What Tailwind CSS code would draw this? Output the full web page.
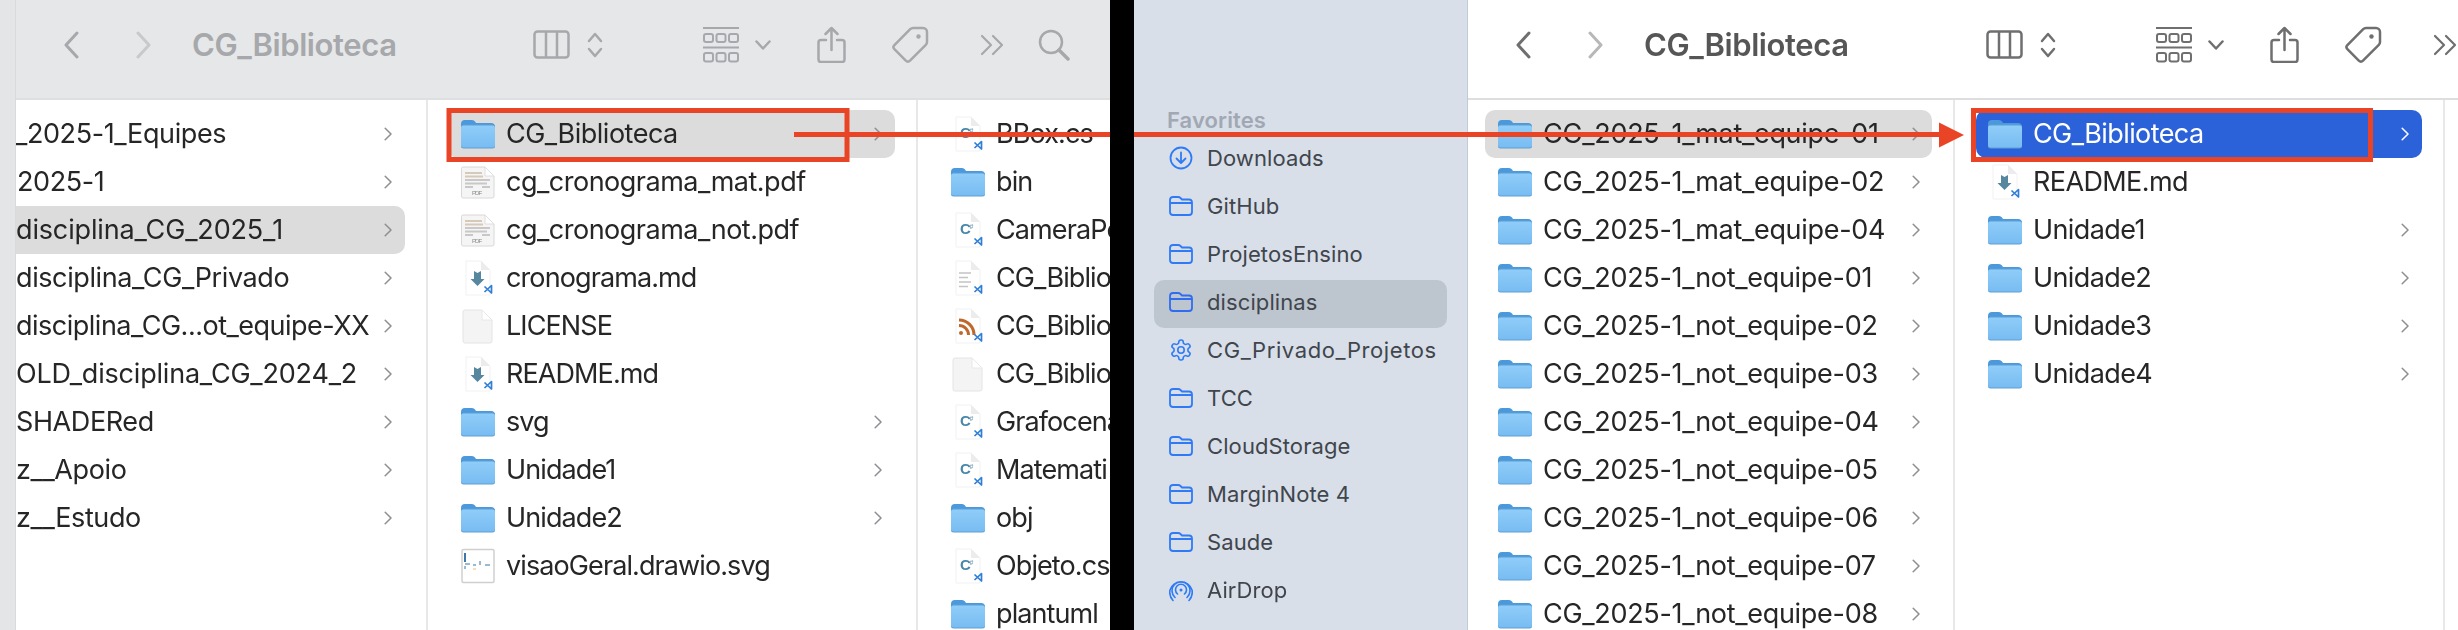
<!DOCTYPE html>
<html lang="en">
<head>
    <meta charset="UTF-8">
    <title>CG_Biblioteca</title>
    <script src="https://cdn.jsdelivr.net/npm/@tailwindcss/browser@4"></script>
</head>
<body class="bg-white">
    <!-- shared icons (not display:none, the gradient would stop working) -->
    <svg class="absolute h-0 w-0">
        <defs>
            <linearGradient id="fold" x1="0" y1="0" x2="0" y2="1"><stop offset="0" stop-color="#8fcdf9"/><stop offset="1" stop-color="#78bcf2"/></linearGradient>
        </defs>
        <symbol id="folder" viewBox="0 0 34 30">
            <path d="M0 5q0-4 4-4h7q2 0 3 1.500l1 1.500h15q4 0 4 4v8H0z" fill="#4b98dc"/>
            <path d="M0 8q0-2.500 2.500-2.500h29q2.500 0 2.500 2.500v19q0 2.500-2.500 2.500h-29q-2.500 0-2.500-2.500z" fill="#5d9fd2"/>
            <path d="M0 8.500q0-2 2.500-2h29q2.500 0 2.500 2v17.500q0 2.500-2.500 2.500h-29q-2.500 0-2.500-2.500z" fill="url(#fold)"/>
        </symbol>
        <symbol id="chev" viewBox="0 0 8 14"><path d="M1.200 1.200 7 7l-5.800 5.800" fill="none" stroke="currentColor" stroke-width="1.500" stroke-linecap="round" stroke-linejoin="round"/></symbol>
        <symbol id="vs" viewBox="0 0 34 36"><path d="M23.500 26.500l7 6.500V25.500l-7 6.500" fill="none" stroke="#2f7ed8" stroke-width="1.700" stroke-linejoin="round"/></symbol>
        <symbol id="page" viewBox="0 0 34 36">
            <path d="M5 1h15l9 9v25H5z" fill="#fff" stroke="#f1f1f1"/>
            <path d="M20 1v9h9z" fill="#ececec"/>
        </symbol>
        <symbol id="md" viewBox="0 0 34 36">
            <use href="#page"/>
            <path d="M13 11l3.500 2 3.500-2v8h3.500l-7 7-7-7H13z" fill="#56879f"/>
            <use href="#vs"/>
        </symbol>
        <symbol id="cs" viewBox="0 0 34 36">
            <use href="#page"/>
            <text x="9" y="22" font-family="Liberation Sans" font-weight="700" font-size="15" fill="#4a86a8">C</text>
            <text x="18.500" y="17" font-family="Liberation Sans" font-weight="700" font-size="7" fill="#7fa6bd">#</text>
            <use href="#vs"/>
        </symbol>
        <symbol id="lines" viewBox="0 0 34 36">
            <use href="#page"/>
            <path d="M8 13h12M8 17.500h9M8 22h12M8 26.500h9" stroke="#c4c4c4" stroke-width="1.500"/>
            <use href="#vs"/>
        </symbol>
        <symbol id="rss" viewBox="0 0 34 36">
            <use href="#page"/>
            <circle cx="10" cy="25" r="2" fill="#c0682c"/>
            <path d="M8 17.500a9.500 9.500 0 0 1 9.500 9.500M8 12a15 15 0 0 1 15 15" fill="none" stroke="#c0682c" stroke-width="3"/>
            <use href="#vs"/>
        </symbol>
        <symbol id="blank" viewBox="0 0 34 36">
            <path d="M4 2h17l10 10v21q0 2-2 2H4q-2 0-2-2V4q0-2 2-2z" fill="#f4f4f4" stroke="#e4e4e4"/>
            <path d="M21 2v10h10z" fill="#fff" stroke="#e8e8e8"/>
        </symbol>
        <symbol id="pdf" viewBox="0 0 34 36">
            <path d="M2 3h22l9 9v20q0 2-2 2H2q-1.500 0-1.500-2V4.500Q.5 3 2 3z" fill="#f5f5f5" stroke="#d8d8d8"/>
            <path d="M24 3v9h9z" fill="#fff" stroke="#dedede"/>
            <path d="M4 9h17M4 12.500h18" stroke="#d7c9b8" stroke-width="2"/>
            <path d="M4 16h25M4 19.500h22M4 23h8M21 23h8" stroke="#c8c8c8" stroke-width="2"/>
            <text x="11" y="31" font-family="Liberation Sans" font-size="6" fill="#8a8a8a">PDF</text>
        </symbol>
        <symbol id="drawio" viewBox="0 0 34 36">
            <rect x="1" y="1.500" width="32" height="33" rx="1.500" fill="#fff" stroke="#cfcfcf" stroke-width="1.500"/>
            <path d="M4 5v9" stroke="#3f78a8" stroke-width="2"/>
            <path d="M4 16h5M4 18v3M19 13v4M12 17h3M24 17h5" stroke="#7aa3c4" stroke-width="1.500"/>
            <path d="M12 21h3" stroke="#ecd9a8" stroke-width="1.500"/>
        </symbol>
        <symbol id="back" viewBox="0 0 16 28"><path d="M14 2 3 14l11 12" fill="none" stroke="currentColor" stroke-width="3" stroke-linecap="round" stroke-linejoin="round"/></symbol>
        <symbol id="forward" viewBox="0 0 16 28"><path d="M2 2l11 12L2 26" fill="none" stroke="currentColor" stroke-width="3" stroke-linecap="round" stroke-linejoin="round"/></symbol>
        <symbol id="columns" viewBox="0 0 37 29"><path d="M4.500 1.500h28a3 3 0 0 1 3 3v20a3 3 0 0 1-3 3h-28a3 3 0 0 1-3-3v-20a3 3 0 0 1 3-3zM13 1.500v26M24 1.500v26" fill="none" stroke="currentColor" stroke-width="2.500"/></symbol>
        <symbol id="updown" viewBox="0 0 16 26"><path d="M2 9l6-7 6 7M2 17l6 7 6-7" fill="none" stroke="currentColor" stroke-width="2.500" stroke-linecap="round" stroke-linejoin="round"/></symbol>
        <symbol id="group" viewBox="0 0 36 36">
            <path d="M0 1h36M0 20.500h36" stroke="currentColor" stroke-width="2"/>
            <g fill="none" stroke="currentColor" stroke-width="2">
                <rect x="1" y="7" width="9" height="8" rx="2"/><rect x="13.500" y="7" width="9" height="8" rx="2"/><rect x="26" y="7" width="9" height="8" rx="2"/>
                <rect x="1" y="26" width="9" height="8.500" rx="2"/><rect x="13.500" y="26" width="9" height="8.500" rx="2"/><rect x="26" y="26" width="9" height="8.500" rx="2"/>
            </g>
        </symbol>
        <symbol id="drop" viewBox="0 0 16 10"><path d="M1.500 1.500 8 8.500l6.500-7" fill="none" stroke="currentColor" stroke-width="2.500" stroke-linecap="round" stroke-linejoin="round"/></symbol>
        <symbol id="share" viewBox="0 0 29 37"><path d="M9 14H4a2.500 2.500 0 0 0-2.500 2.500v17A2.500 2.500 0 0 0 4 36h21a2.500 2.500 0 0 0 2.500-2.500v-17A2.500 2.500 0 0 0 25 14h-5M14.500 24V2M8.500 8l6-6 6 6" fill="none" stroke="currentColor" stroke-width="2.500" stroke-linecap="round" stroke-linejoin="round"/></symbol>
        <symbol id="tag" viewBox="0 0 37 37">
            <path d="M21 2h10a4 4 0 0 1 4 4v10a4 4 0 0 1-1.200 2.800L18 34.600a3 3 0 0 1-4.200 0L2.400 23.200a3 3 0 0 1 0-4.200L18.200 3.200A4 4 0 0 1 21 2z" fill="none" stroke="currentColor" stroke-width="2.500"/>
            <circle cx="26.500" cy="10.500" r="2.200" fill="currentColor"/>
        </symbol>
        <symbol id="more" viewBox="0 0 25 22"><path d="M2 2l9 9-9 9M13 2l9 9-9 9" fill="none" stroke="currentColor" stroke-width="2.200" stroke-linecap="round" stroke-linejoin="round"/></symbol>
        <symbol id="search" viewBox="0 0 32 32"><circle cx="13" cy="13" r="11" fill="none" stroke="currentColor" stroke-width="2.500"/><path d="M21 21l9 9" stroke="currentColor" stroke-width="3.500" stroke-linecap="round"/></symbol>
        <symbol id="side-folder" viewBox="0 0 24 20"><path d="M1 4q0-3 3-3h5q1.500 0 2.500 1l1.500 1.500h7q3 0 3 3V16q0 3-3 3H4q-3 0-3-3zM1 7h22" fill="none" stroke="currentColor" stroke-width="1.800"/></symbol>
        <symbol id="side-down" viewBox="0 0 24 24"><circle cx="12" cy="12" r="10.500" fill="none" stroke="currentColor" stroke-width="1.800"/><path d="M12 6.500v10M7.500 12.500l4.500 4.500 4.500-4.500" fill="none" stroke="currentColor" stroke-width="1.800" stroke-linecap="round" stroke-linejoin="round"/></symbol>
        <symbol id="side-gear" viewBox="0 0 24 24"><path d="M12.220 2h-.44a2 2 0 0 0-2 2v.18a2 2 0 0 1-1 1.730l-.43.250a2 2 0 0 1-2 0l-.15-.08a2 2 0 0 0-2.730.730l-.22.380a2 2 0 0 0 .730 2.730l.15.100a2 2 0 0 1 1 1.720v.510a2 2 0 0 1-1 1.740l-.15.090a2 2 0 0 0-.730 2.730l.22.380a2 2 0 0 0 2.730.730l.15-.08a2 2 0 0 1 2 0l.43.250a2 2 0 0 1 1 1.730V20a2 2 0 0 0 2 2h.44a2 2 0 0 0 2-2v-.18a2 2 0 0 1 1-1.730l.43-.25a2 2 0 0 1 2 0l.15.08a2 2 0 0 0 2.730-.73l.22-.39a2 2 0 0 0-.73-2.730l-.15-.08a2 2 0 0 1-1-1.740v-.5a2 2 0 0 1 1-1.740l.15-.09a2 2 0 0 0 .73-2.730l-.22-.38a2 2 0 0 0-2.730-.73l-.15.08a2 2 0 0 1-2 0l-.43-.25a2 2 0 0 1-1-1.730V4a2 2 0 0 0-2-2z" fill="none" stroke="currentColor" stroke-width="1.600"/><circle cx="12" cy="12" r="3.200" fill="none" stroke="currentColor" stroke-width="1.600"/></symbol>
        <symbol id="side-air" viewBox="0 0 24 24"><circle cx="12" cy="12" r="1.500" fill="currentColor"/><path d="M8.500 16a5.500 5.500 0 1 1 7 0M6 19.500a9 9 0 1 1 12 0M4 22.500a12 12 0 0 1-3-10.500A11.500 11.500 0 0 1 23 12a12 12 0 0 1-3 10.500" fill="none" stroke="currentColor" stroke-width="1.600" stroke-linecap="round"/></symbol>
    </svg>

    <div class="relative flex h-[630px] w-[2458px] overflow-hidden font-['Inter',sans-serif] text-[27px] tracking-[-0.3px] text-[#262626] blur-[0.4px]">
        <div class="w-4 shrink-0 border-r border-[#d9dadc] bg-[#e4e5e7]"></div>

        <!-- left window (inactive) -->
        <div class="flex w-[1094px] shrink-0 flex-col overflow-hidden">
            <div class="flex h-[100px] shrink-0 items-center border-b-2 border-[#dedfe1] bg-[#e6e7e9] pb-[9px] pl-[47px] text-[#a6a8ab]">
                <svg class="h-7 w-4 shrink-0"><use href="#back"/></svg>
                <svg class="ml-[57px] h-7 w-4 shrink-0 text-[#c8c9cc]"><use href="#forward"/></svg>
                <div class="ml-[40px] mt-[2px] w-[202px] shrink-0 whitespace-nowrap text-[31px] font-semibold tracking-[-0.4px]">CG_Biblioteca</div>
                <svg class="ml-[139px] h-[29px] w-[37px] shrink-0"><use href="#columns"/></svg>
                <svg class="ml-[17px] h-[26px] w-4 shrink-0"><use href="#updown"/></svg>
                <svg class="ml-[100px] h-9 w-9 shrink-0"><use href="#group"/></svg>
                <svg class="ml-4 h-2.5 w-4 shrink-0"><use href="#drop"/></svg>
                <svg class="ml-[46px] h-[37px] w-[29px] shrink-0"><use href="#share"/></svg>
                <svg class="ml-[46px] h-[37px] w-[37px] shrink-0"><use href="#tag"/></svg>
                <svg class="ml-[51px] h-[22px] w-[25px] shrink-0"><use href="#more"/></svg>
                <svg class="ml-[33px] h-8 w-8 shrink-0"><use href="#search"/></svg>
            </div>
            <div class="flex flex-1 overflow-hidden">
                <div class="w-[412px] shrink-0 overflow-hidden border-r-2 border-[#e8e8e8] pt-2.5 tracking-[-0.4px]">
                    <div class="-ml-[20px] mr-[21px] flex h-12 items-center pl-[19px] pr-[13px]"><span class="flex-1 truncate">_2025-1_Equipes</span><svg class="h-[14px] w-2 text-[#8e8e93]"><use href="#chev"/></svg></div>
                    <div class="-ml-[20px] mr-[21px] flex h-12 items-center pl-[21px] pr-[13px]"><span class="flex-1 truncate">2025-1</span><svg class="h-[14px] w-2 text-[#8e8e93]"><use href="#chev"/></svg></div>
                    <div class="-ml-[20px] mr-[21px] flex h-12 items-center rounded-[10px] bg-[#dcdcdc] pl-[20px] pr-[13px]"><span class="flex-1 truncate tracking-[-0.15px]">disciplina_CG_2025_1</span><svg class="h-[14px] w-2 text-[#8e8e93]"><use href="#chev"/></svg></div>
                    <div class="-ml-[20px] mr-[21px] flex h-12 items-center pl-[20px] pr-[13px]"><span class="flex-1 truncate">disciplina_CG_Privado</span><svg class="h-[14px] w-2 text-[#8e8e93]"><use href="#chev"/></svg></div>
                    <div class="-ml-[20px] mr-[21px] flex h-12 items-center pl-[20px] pr-[13px]"><span class="flex-1 truncate tracking-[-0.5px]">disciplina_CG...ot_equipe-XX</span><svg class="h-[14px] w-2 text-[#8e8e93]"><use href="#chev"/></svg></div>
                    <div class="-ml-[20px] mr-[21px] flex h-12 items-center pl-[20px] pr-[13px]"><span class="flex-1 truncate tracking-[-0.2px]">OLD_disciplina_CG_2024_2</span><svg class="h-[14px] w-2 text-[#8e8e93]"><use href="#chev"/></svg></div>
                    <div class="-ml-[20px] mr-[21px] flex h-12 items-center pl-[20px] pr-[13px]"><span class="flex-1 truncate">SHADERed</span><svg class="h-[14px] w-2 text-[#8e8e93]"><use href="#chev"/></svg></div>
                    <div class="-ml-[20px] mr-[21px] flex h-12 items-center pl-[20px] pr-[13px]"><span class="flex-1 truncate">z__Apoio</span><svg class="h-[14px] w-2 text-[#8e8e93]"><use href="#chev"/></svg></div>
                    <div class="-ml-[20px] mr-[21px] flex h-12 items-center pl-[20px] pr-[13px]"><span class="flex-1 truncate">z__Estudo</span><svg class="h-[14px] w-2 text-[#8e8e93]"><use href="#chev"/></svg></div>
                </div>
                <div class="w-[490px] shrink-0 overflow-hidden border-r-2 border-[#e8e8e8] pt-2.5 tracking-[-0.9px]">
                    <div class="ml-5 mr-[21px] flex h-12 items-center rounded-[10px] bg-[#dcdcdc] pl-[13px] pr-[13px]"><svg class="h-[30px] w-[34px] shrink-0"><use href="#folder"/></svg><span class="ml-[11px] flex-1 truncate tracking-[-0.5px]">CG_Biblioteca</span><svg class="h-[14px] w-2 text-[#8e8e93]"><use href="#chev"/></svg></div>
                    <div class="ml-5 mr-[21px] flex h-12 items-center pl-[13px] pr-[13px]"><svg class="h-9 w-[34px] shrink-0"><use href="#pdf"/></svg><span class="ml-[11px] flex-1 truncate tracking-[-0.5px]">cg_cronograma_mat.pdf</span></div>
                    <div class="ml-5 mr-[21px] flex h-12 items-center pl-[13px] pr-[13px]"><svg class="h-9 w-[34px] shrink-0"><use href="#pdf"/></svg><span class="ml-[11px] flex-1 truncate tracking-[-0.5px]">cg_cronograma_not.pdf</span></div>
                    <div class="ml-5 mr-[21px] flex h-12 items-center pl-[13px] pr-[13px]"><svg class="h-9 w-[34px] shrink-0"><use href="#md"/></svg><span class="ml-[11px] flex-1 truncate">cronograma.md</span></div>
                    <div class="ml-5 mr-[21px] flex h-12 items-center pl-[13px] pr-[13px]"><svg class="h-9 w-[34px] shrink-0"><use href="#blank"/></svg><span class="ml-[11px] flex-1 truncate">LICENSE</span></div>
                    <div class="ml-5 mr-[21px] flex h-12 items-center pl-[13px] pr-[13px]"><svg class="h-9 w-[34px] shrink-0"><use href="#md"/></svg><span class="ml-[11px] flex-1 truncate">README.md</span></div>
                    <div class="ml-5 mr-[21px] flex h-12 items-center pl-[13px] pr-[13px]"><svg class="h-[30px] w-[34px] shrink-0"><use href="#folder"/></svg><span class="ml-[11px] flex-1 truncate">svg</span><svg class="h-[14px] w-2 text-[#8e8e93]"><use href="#chev"/></svg></div>
                    <div class="ml-5 mr-[21px] flex h-12 items-center pl-[13px] pr-[13px]"><svg class="h-[30px] w-[34px] shrink-0"><use href="#folder"/></svg><span class="ml-[11px] flex-1 truncate">Unidade1</span><svg class="h-[14px] w-2 text-[#8e8e93]"><use href="#chev"/></svg></div>
                    <div class="ml-5 mr-[21px] flex h-12 items-center pl-[13px] pr-[13px]"><svg class="h-[30px] w-[34px] shrink-0"><use href="#folder"/></svg><span class="ml-[11px] flex-1 truncate">Unidade2</span><svg class="h-[14px] w-2 text-[#8e8e93]"><use href="#chev"/></svg></div>
                    <div class="ml-5 mr-[21px] flex h-12 items-center pl-[13px] pr-[13px]"><svg class="h-9 w-[34px] shrink-0"><use href="#drawio"/></svg><span class="ml-[11px] flex-1 truncate">visaoGeral.drawio.svg</span></div>
                </div>
                <div class="flex-1 overflow-hidden whitespace-nowrap pl-[33px] pt-2.5 tracking-[-0.9px]">
                    <div class="flex h-12 items-center"><svg class="h-9 w-[34px] shrink-0"><use href="#cs"/></svg><span class="ml-[11px]">BBox.cs</span></div>
                    <div class="flex h-12 items-center"><svg class="h-[30px] w-[34px] shrink-0"><use href="#folder"/></svg><span class="ml-[11px]">bin</span></div>
                    <div class="flex h-12 items-center"><svg class="h-9 w-[34px] shrink-0"><use href="#cs"/></svg><span class="ml-[11px]">CameraPe</span></div>
                    <div class="flex h-12 items-center"><svg class="h-9 w-[34px] shrink-0"><use href="#lines"/></svg><span class="ml-[11px]">CG_Biblio</span></div>
                    <div class="flex h-12 items-center"><svg class="h-9 w-[34px] shrink-0"><use href="#rss"/></svg><span class="ml-[11px]">CG_Biblio</span></div>
                    <div class="flex h-12 items-center"><svg class="h-9 w-[34px] shrink-0"><use href="#blank"/></svg><span class="ml-[11px]">CG_Biblio</span></div>
                    <div class="flex h-12 items-center"><svg class="h-9 w-[34px] shrink-0"><use href="#cs"/></svg><span class="ml-[11px]">Grafocena</span></div>
                    <div class="flex h-12 items-center"><svg class="h-9 w-[34px] shrink-0"><use href="#cs"/></svg><span class="ml-[11px]">Matemati</span></div>
                    <div class="flex h-12 items-center"><svg class="h-[30px] w-[34px] shrink-0"><use href="#folder"/></svg><span class="ml-[11px]">obj</span></div>
                    <div class="flex h-12 items-center"><svg class="h-9 w-[34px] shrink-0"><use href="#cs"/></svg><span class="ml-[11px]">Objeto.cs</span></div>
                    <div class="flex h-12 items-center"><svg class="h-[30px] w-[34px] shrink-0"><use href="#folder"/></svg><span class="ml-[11px]">plantuml</span></div>
                </div>
            </div>
        </div>

        <!-- black gap between the two screenshots, sits over the arrow -->
        <div class="relative z-20 w-6 shrink-0 bg-black"></div>

        <!-- sidebar -->
        <div class="w-[334px] shrink-0 border-r border-[#c3cad6] bg-[#d8dfe9] pt-[106px] text-[22px] tracking-[0.1px] text-[#41454c]">
            <div class="flex h-7 items-center pl-[33px] font-semibold text-[#a1a8b3]">Favorites</div>
            <div class="mx-5 flex h-12 items-center pl-[15px]"><svg class="h-6 w-6 shrink-0 text-[#2f7bf6]"><use href="#side-down"/></svg><span class="ml-[14px]">Downloads</span></div>
            <div class="mx-5 flex h-12 items-center pl-[15px]"><svg class="h-5 w-6 shrink-0 text-[#2f7bf6]"><use href="#side-folder"/></svg><span class="ml-[14px]">GitHub</span></div>
            <div class="mx-5 flex h-12 items-center pl-[15px]"><svg class="h-5 w-6 shrink-0 text-[#2f7bf6]"><use href="#side-folder"/></svg><span class="ml-[14px]">ProjetosEnsino</span></div>
            <div class="mx-5 -mb-[2px] mt-[2px] flex h-12 items-center rounded-[10px] bg-[#bdc5cf] pb-1 pl-[15px]"><svg class="h-5 w-6 shrink-0 text-[#2f6cf0]"><use href="#side-folder"/></svg><span class="ml-[14px]">disciplinas</span></div>
            <div class="mx-5 flex h-12 items-center pl-[15px]"><svg class="h-6 w-6 shrink-0 text-[#2f7bf6]"><use href="#side-gear"/></svg><span class="ml-[14px] tracking-[0.6px]">CG_Privado_Projetos</span></div>
            <div class="mx-5 flex h-12 items-center pl-[15px]"><svg class="h-5 w-6 shrink-0 text-[#2f7bf6]"><use href="#side-folder"/></svg><span class="ml-[14px]">TCC</span></div>
            <div class="mx-5 flex h-12 items-center pl-[15px]"><svg class="h-5 w-6 shrink-0 text-[#2f7bf6]"><use href="#side-folder"/></svg><span class="ml-[14px]">CloudStorage</span></div>
            <div class="mx-5 flex h-12 items-center pl-[15px]"><svg class="h-5 w-6 shrink-0 text-[#2f7bf6]"><use href="#side-folder"/></svg><span class="ml-[14px]">MarginNote 4</span></div>
            <div class="mx-5 flex h-12 items-center pl-[15px]"><svg class="h-5 w-6 shrink-0 text-[#2f7bf6]"><use href="#side-folder"/></svg><span class="ml-[14px]">Saude</span></div>
            <div class="mx-5 flex h-12 items-center pl-[15px]"><svg class="h-6 w-6 shrink-0 text-[#2f7bf6]"><use href="#side-air"/></svg><span class="ml-[14px]">AirDrop</span></div>
        </div>

        <!-- right window (active) -->
        <div class="flex flex-1 flex-col overflow-hidden">
            <div class="flex h-[100px] shrink-0 items-center border-b-2 border-[#dedede] bg-white pb-[9px] pl-[47px] text-[#6f6f71]">
                <svg class="h-7 w-4 shrink-0"><use href="#back"/></svg>
                <svg class="ml-[57px] h-7 w-4 shrink-0 text-[#b8b8b8]"><use href="#forward"/></svg>
                <div class="ml-[40px] mt-[2px] w-[202px] shrink-0 whitespace-nowrap text-[31px] font-semibold tracking-[-0.4px] text-[#565656]">CG_Biblioteca</div>
                <svg class="ml-[140px] h-[29px] w-[37px] shrink-0"><use href="#columns"/></svg>
                <svg class="ml-[17px] h-[26px] w-4 shrink-0"><use href="#updown"/></svg>
                <svg class="ml-[100px] h-9 w-9 shrink-0"><use href="#group"/></svg>
                <svg class="ml-4 h-2.5 w-4 shrink-0"><use href="#drop"/></svg>
                <svg class="ml-[46px] h-[37px] w-[29px] shrink-0"><use href="#share"/></svg>
                <svg class="ml-[46px] h-[37px] w-[37px] shrink-0"><use href="#tag"/></svg>
                <svg class="ml-[51px] h-[22px] w-[25px] shrink-0"><use href="#more"/></svg>
            </div>
            <div class="flex flex-1 overflow-hidden">
                <div class="w-[487px] shrink-0 overflow-hidden border-r-2 border-[#e8e8e8] pt-2.5">
                    <div class="ml-[17px] mr-[21px] flex h-12 items-center rounded-[10px] bg-[#dcdcdc] pl-[13px] pr-[12px]"><svg class="h-[30px] w-[34px] shrink-0"><use href="#folder"/></svg><span class="ml-[11px] flex-1 truncate">CG_2025-1_mat_equipe-01</span><svg class="h-[14px] w-2 text-[#8e8e93]"><use href="#chev"/></svg></div>
                    <div class="ml-[17px] mr-[21px] flex h-12 items-center pl-[13px] pr-[12px]"><svg class="h-[30px] w-[34px] shrink-0"><use href="#folder"/></svg><span class="ml-[11px] flex-1 truncate">CG_2025-1_mat_equipe-02</span><svg class="h-[14px] w-2 text-[#8e8e93]"><use href="#chev"/></svg></div>
                    <div class="ml-[17px] mr-[21px] flex h-12 items-center pl-[13px] pr-[12px]"><svg class="h-[30px] w-[34px] shrink-0"><use href="#folder"/></svg><span class="ml-[11px] flex-1 truncate">CG_2025-1_mat_equipe-04</span><svg class="h-[14px] w-2 text-[#8e8e93]"><use href="#chev"/></svg></div>
                    <div class="ml-[17px] mr-[21px] flex h-12 items-center pl-[13px] pr-[12px]"><svg class="h-[30px] w-[34px] shrink-0"><use href="#folder"/></svg><span class="ml-[11px] flex-1 truncate">CG_2025-1_not_equipe-01</span><svg class="h-[14px] w-2 text-[#8e8e93]"><use href="#chev"/></svg></div>
                    <div class="ml-[17px] mr-[21px] flex h-12 items-center pl-[13px] pr-[12px]"><svg class="h-[30px] w-[34px] shrink-0"><use href="#folder"/></svg><span class="ml-[11px] flex-1 truncate">CG_2025-1_not_equipe-02</span><svg class="h-[14px] w-2 text-[#8e8e93]"><use href="#chev"/></svg></div>
                    <div class="ml-[17px] mr-[21px] flex h-12 items-center pl-[13px] pr-[12px]"><svg class="h-[30px] w-[34px] shrink-0"><use href="#folder"/></svg><span class="ml-[11px] flex-1 truncate">CG_2025-1_not_equipe-03</span><svg class="h-[14px] w-2 text-[#8e8e93]"><use href="#chev"/></svg></div>
                    <div class="ml-[17px] mr-[21px] flex h-12 items-center pl-[13px] pr-[12px]"><svg class="h-[30px] w-[34px] shrink-0"><use href="#folder"/></svg><span class="ml-[11px] flex-1 truncate">CG_2025-1_not_equipe-04</span><svg class="h-[14px] w-2 text-[#8e8e93]"><use href="#chev"/></svg></div>
                    <div class="ml-[17px] mr-[21px] flex h-12 items-center pl-[13px] pr-[12px]"><svg class="h-[30px] w-[34px] shrink-0"><use href="#folder"/></svg><span class="ml-[11px] flex-1 truncate">CG_2025-1_not_equipe-05</span><svg class="h-[14px] w-2 text-[#8e8e93]"><use href="#chev"/></svg></div>
                    <div class="ml-[17px] mr-[21px] flex h-12 items-center pl-[13px] pr-[12px]"><svg class="h-[30px] w-[34px] shrink-0"><use href="#folder"/></svg><span class="ml-[11px] flex-1 truncate">CG_2025-1_not_equipe-06</span><svg class="h-[14px] w-2 text-[#8e8e93]"><use href="#chev"/></svg></div>
                    <div class="ml-[17px] mr-[21px] flex h-12 items-center pl-[13px] pr-[12px]"><svg class="h-[30px] w-[34px] shrink-0"><use href="#folder"/></svg><span class="ml-[11px] flex-1 truncate">CG_2025-1_not_equipe-07</span><svg class="h-[14px] w-2 text-[#8e8e93]"><use href="#chev"/></svg></div>
                    <div class="ml-[17px] mr-[21px] flex h-12 items-center pl-[13px] pr-[12px]"><svg class="h-[30px] w-[34px] shrink-0"><use href="#folder"/></svg><span class="ml-[11px] flex-1 truncate">CG_2025-1_not_equipe-08</span><svg class="h-[14px] w-2 text-[#8e8e93]"><use href="#chev"/></svg></div>
                </div>
                <div class="w-[490px] shrink-0 overflow-hidden border-r-2 border-[#e8e8e8] pt-2.5 tracking-[-0.6px]">
                    <div class="ml-[21px] mr-[21px] flex h-12 items-center rounded-[10px] bg-[#2b62da] pl-3 pr-[13px] text-white"><svg class="h-[30px] w-[34px] shrink-0"><use href="#folder"/></svg><span class="ml-[11px] flex-1 truncate">CG_Biblioteca</span><svg class="h-[14px] w-2 text-white"><use href="#chev"/></svg></div>
                    <div class="ml-[21px] mr-[21px] flex h-12 items-center pl-3 pr-[13px]"><svg class="h-9 w-[34px] shrink-0"><use href="#md"/></svg><span class="ml-[11px] flex-1 truncate">README.md</span></div>
                    <div class="ml-[21px] mr-[21px] flex h-12 items-center pl-3 pr-[13px]"><svg class="h-[30px] w-[34px] shrink-0"><use href="#folder"/></svg><span class="ml-[11px] flex-1 truncate">Unidade1</span><svg class="h-[14px] w-2 text-[#8e8e93]"><use href="#chev"/></svg></div>
                    <div class="ml-[21px] mr-[21px] flex h-12 items-center pl-3 pr-[13px]"><svg class="h-[30px] w-[34px] shrink-0"><use href="#folder"/></svg><span class="ml-[11px] flex-1 truncate">Unidade2</span><svg class="h-[14px] w-2 text-[#8e8e93]"><use href="#chev"/></svg></div>
                    <div class="ml-[21px] mr-[21px] flex h-12 items-center pl-3 pr-[13px]"><svg class="h-[30px] w-[34px] shrink-0"><use href="#folder"/></svg><span class="ml-[11px] flex-1 truncate">Unidade3</span><svg class="h-[14px] w-2 text-[#8e8e93]"><use href="#chev"/></svg></div>
                    <div class="ml-[21px] mr-[21px] flex h-12 items-center pl-3 pr-[13px]"><svg class="h-[30px] w-[34px] shrink-0"><use href="#folder"/></svg><span class="ml-[11px] flex-1 truncate">Unidade4</span><svg class="h-[14px] w-2 text-[#8e8e93]"><use href="#chev"/></svg></div>
                </div>
            </div>
        </div>

        <!-- red annotations drawn over both screenshots -->
        <svg class="pointer-events-none absolute inset-0 z-10 h-[630px] w-[2458px]" viewBox="0 0 2458 630">
            <rect x="449" y="110.500" width="398" height="49" fill="none" stroke="#ea4427" stroke-width="5"/>
            <rect x="1973.500" y="110.500" width="397" height="49" fill="none" stroke="#ea4427" stroke-width="5"/>
            <path d="M794 134.500H1942" stroke="#ea4427" stroke-width="5"/>
            <path d="M1939 122.500 1964 135l-25 12.500z" fill="#ea4427"/>
        </svg>
    </div>
</body>
</html>
